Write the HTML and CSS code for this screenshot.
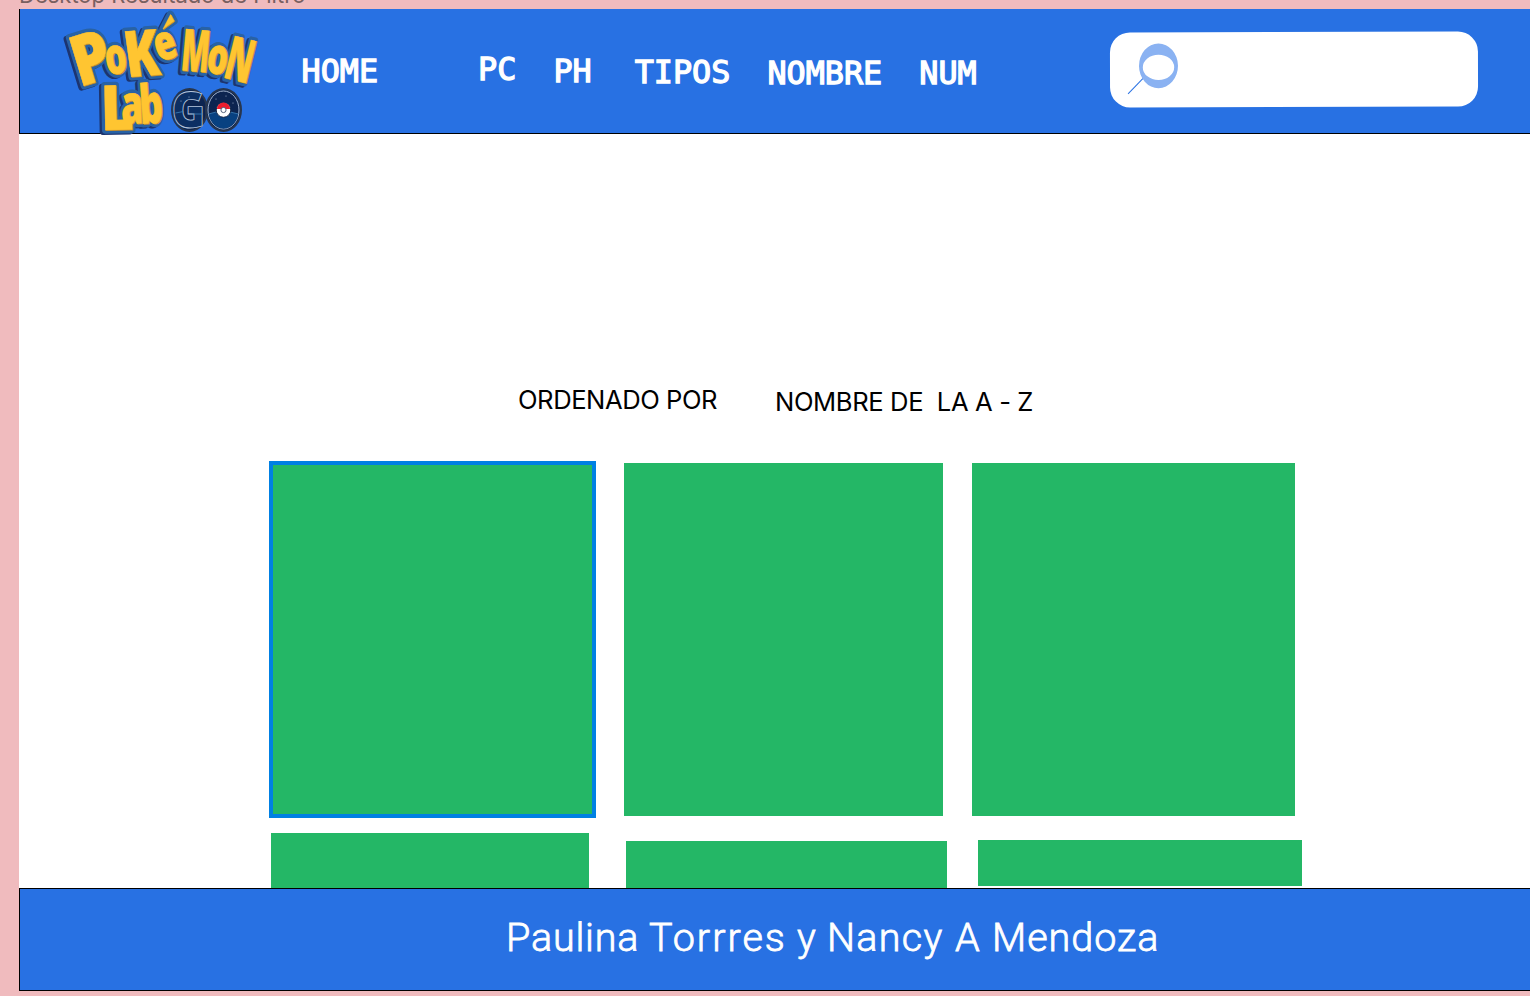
FILE: index.html
```html
<!DOCTYPE html>
<html lang="es">
<head>
<meta charset="utf-8">
<title>Pokémon Lab GO</title>
<link rel="stylesheet" href="styles.css">
</head>
<body>
<div class="frame-title">Desktop Resultado de Filtro</div>
<div class="frame">
  <header class="header">
    <svg class="logo" viewBox="60 5 200 132" role="img" aria-label="Pokémon Lab GO">
      <defs>
        <g id="letters">
          <text transform="translate(86 85) rotate(-17) scale(.88 1)" font-size="70" x="-8">P</text>
          <text transform="translate(107 75) rotate(-8) scale(.69 1)" font-size="50">o</text>
          <text transform="translate(127.500 77) rotate(-4) skewX(4) scale(.78 1)" font-size="64">K</text>
          <text transform="translate(159 62) rotate(-18) scale(.74 1)" font-size="48">e</text>
          <text transform="translate(180 70) rotate(5) scale(.5 1)" font-size="58">M</text>
          <text transform="translate(205 72) rotate(9) scale(.66 1)" font-size="50">o</text>
          <text transform="translate(222 77) rotate(14) scale(.54 1)" font-size="60">N</text>
          <text transform="translate(101 130) rotate(-1) scale(.92 1)" font-size="62">L</text>
          <text transform="translate(121.500 124) rotate(-2) scale(.66 1)" font-size="54">a</text>
          <text transform="translate(140.500 124) rotate(-4) scale(.68 1)" font-size="54">b</text>
          <path d="M163 29 L170.500 14.500 L174 21 Z"/>
        </g>
      </defs>
      <use class="logo-shadow" href="#letters" x="-2.500" y="1.500"/>
      <use class="logo-outline" href="#letters"/>
      <use class="logo-bevel" href="#letters" x=".7" y=".5"/>
      <use class="logo-face" href="#letters"/>
      <g>
        <ellipse class="go-rim" cx="189.500" cy="110" rx="17.500" ry="21"/>
        <ellipse class="go-rim" cx="223.500" cy="110" rx="17.500" ry="21"/>
        <ellipse class="go-line" cx="223.500" cy="110" rx="15.500" ry="19"/>
        <path class="go-sea" d="M209 114q14-5 29 0c-1 8-7 14.500-14.500 14.500S210 122 209 114z"/>
        <path class="go-horizon" d="M208.500 114q14-5 30 0"/>
        <text class="go-letter" transform="translate(171.500 128) scale(.93 1)">G</text>
        <path class="go-horizon" d="M175.500 113l8-1.500M192 114h11"/>
        <circle class="go-stars" cx="181" cy="101" r=".5"/>
        <circle class="go-stars" cx="189" cy="97" r=".5"/>
        <circle class="go-stars" cx="216" cy="99" r=".5"/>
        <circle class="go-stars" cx="226" cy="96" r=".5"/>
        <circle class="go-stars" cx="233" cy="103" r=".5"/>
        <circle class="ball" cx="223.500" cy="110" r="7.300"/>
        <path class="ball-top" d="M217 109a6.500 6.500 0 0 1 13 0z"/>
        <circle class="ball-core" cx="223.500" cy="110" r="2.600"/>
      </g>
    </svg>
    <nav class="nav">
      <a class="nav-item home">HOME</a>
      <a class="nav-item pc">PC</a>
      <a class="nav-item ph">PH</a>
      <a class="nav-item tipos">TIPOS</a>
      <a class="nav-item nombre">NOMBRE</a>
      <a class="nav-item num">NUM</a>
    </nav>
    <div class="search">
      <svg class="search-icon" viewBox="0 0 54 54">
        <path d="M2 51.500 17 36" stroke="#2871e3" stroke-width="1" fill="none"/>
        <ellipse cx="32.500" cy="23.500" rx="19.500" ry="22.300" fill="#8ab2f2"/>
        <ellipse cx="32.500" cy="25" rx="15.700" ry="12.700" fill="#fff"/>
      </svg>
    </div>
  </header>
  <main class="content">
    <div class="sort"><span class="sort-label">ORDENADO POR</span><span class="sort-value">NOMBRE DE&nbsp; LA A - Z</span></div>
    <div class="row">
      <div class="card selected"></div>
      <div class="card second"></div>
      <div class="card third"></div>
    </div>
    <div class="row next">
      <div class="card fourth"></div>
      <div class="card fifth"></div>
      <div class="card sixth"></div>
    </div>
  </main>
  <footer class="footer"><span class="w1">Paulina</span><span class="w2">Torrres</span><span class="w3">y</span><span class="w4">Nancy</span><span class="w5">A</span><span class="w6">Mendoza</span></footer>
</div>
</body>
</html>
```
FILE: styles.css
```css
* { box-sizing: border-box; }
body { margin: 0; height: 996px; overflow: hidden; background: #f0bbbe; font-family: Inter, sans-serif; }
.frame-title { height: 9px; padding: 0 0 6px 19px; overflow: hidden; display: flex; align-items: flex-end; font-size: 22px; line-height: 16px; color: #795f60; white-space: nowrap; }
.frame { margin-left: 19px; width: 1520px; height: 982px; background: #fff; display: flex; flex-direction: column; }
.header { height: 125px; flex: none; border: 1px solid #000; border-top: 0; background: #2871e3; display: flex; align-items: flex-start; }
.logo { width: 200px; height: 132px; margin: -4px 0 0 40px; flex: none; overflow: visible; font-family: "Open Sans", sans-serif; font-weight: 800; }
.logo-shadow { fill: #1c3470; stroke: #1c3470; stroke-width: 7px; stroke-linejoin: round; }
.logo-outline { fill: #2862a5; stroke: #2862a5; stroke-width: 7.5px; stroke-linejoin: round; }
.logo-bevel { fill: #c58d2c; stroke: #c58d2c; stroke-width: 1px; }
.logo-face { fill: #ffc531; stroke: #ffc531; stroke-width: .5px; }
.go-rim { fill: #0c2450; stroke: #27364f; stroke-width: 2px; }
.go-line { fill: #0c2450; stroke: #b4c5dc; stroke-width: .9px; }
.go-sea { fill: #084181; }
.go-horizon { fill: none; stroke: #3e83bd; stroke-width: .8px; }
.go-letter { font-size: 49px; fill: #0c2f63; stroke: #b4c5dc; stroke-width: .9px; }
.go-stars { fill: #b4c5dc; }
.ball { fill: #fff; stroke: #152747; stroke-width: 1px; }
.ball-top { fill: #ec1c2d; }
.ball-core { fill: #fff; stroke: #53627a; stroke-width: 1px; }
.nav { display: flex; width: 812px; flex: none; padding-left: 41.5px; color: #fff; font: 31.8px/36px "DejaVu Sans Mono", monospace; -webkit-text-stroke: 1.3px #fff; }
.home { margin: 44px 100px 0 0; }
.pc { margin: 42px 37px 0 0; }
.ph { margin: 44px 43px 0 0; }
.tipos { margin: 45px 37px 0 0; }
.nombre { margin: 46px 37px 0 0; }
.num { margin-top: 46px; }
.search { width: 368px; height: 75px; margin: 22.9px 0 0 38px; border-radius: 20px; background: #fff; padding: 10px 0 0 16px; transform: rotate(-.15deg); flex: none; }
.search-icon { width: 54px; height: 54px; display: block; }
.content { height: 754px; flex: none; overflow: hidden; }
.sort { display: flex; align-items: flex-start; height: 327px; padding: 250px 0 0 499px; font-size: 25.6px; line-height: 32px; letter-spacing: -.45px; white-space: nowrap; }
.sort-label { width: 257px; }
.sort-value { margin-top: 2px; letter-spacing: -.38px; }
.row { display: flex; padding-left: 250px; height: 357px; align-items: flex-start; }
.card { background: #24b766; }
.selected { width: 327px; height: 357px; border: 4px solid #0080e3; }
.second { width: 319px; height: 353px; margin: 2px 0 0 28px; }
.third { width: 323px; height: 353px; margin: 2px 0 0 29px; }
.next { padding: 15px 0 0 252px; height: 70px; }
.fourth { width: 318px; height: 55px; }
.fifth { width: 321px; height: 47px; margin: 8px 0 0 37px; }
.sixth { width: 324px; height: 46px; margin: 7px 0 0 31px; }
.footer { height: 103px; flex: none; border: 1px solid #000; background: #2871e3; color: #fff; display: flex; padding: 25px 0 0 486px; font: 300 39.5px/48px Roboto, sans-serif; -webkit-text-stroke: .8px #fff; }
.footer span { flex: none; }
.w1 { width: 143px; letter-spacing: .8px; }
.w2 { width: 148px; letter-spacing: 2px; }
.w3 { width: 30px; }
.w4 { width: 128px; letter-spacing: 1.3px; }
.w5 { width: 37px; }
.w6 { letter-spacing: 1px; }
```
